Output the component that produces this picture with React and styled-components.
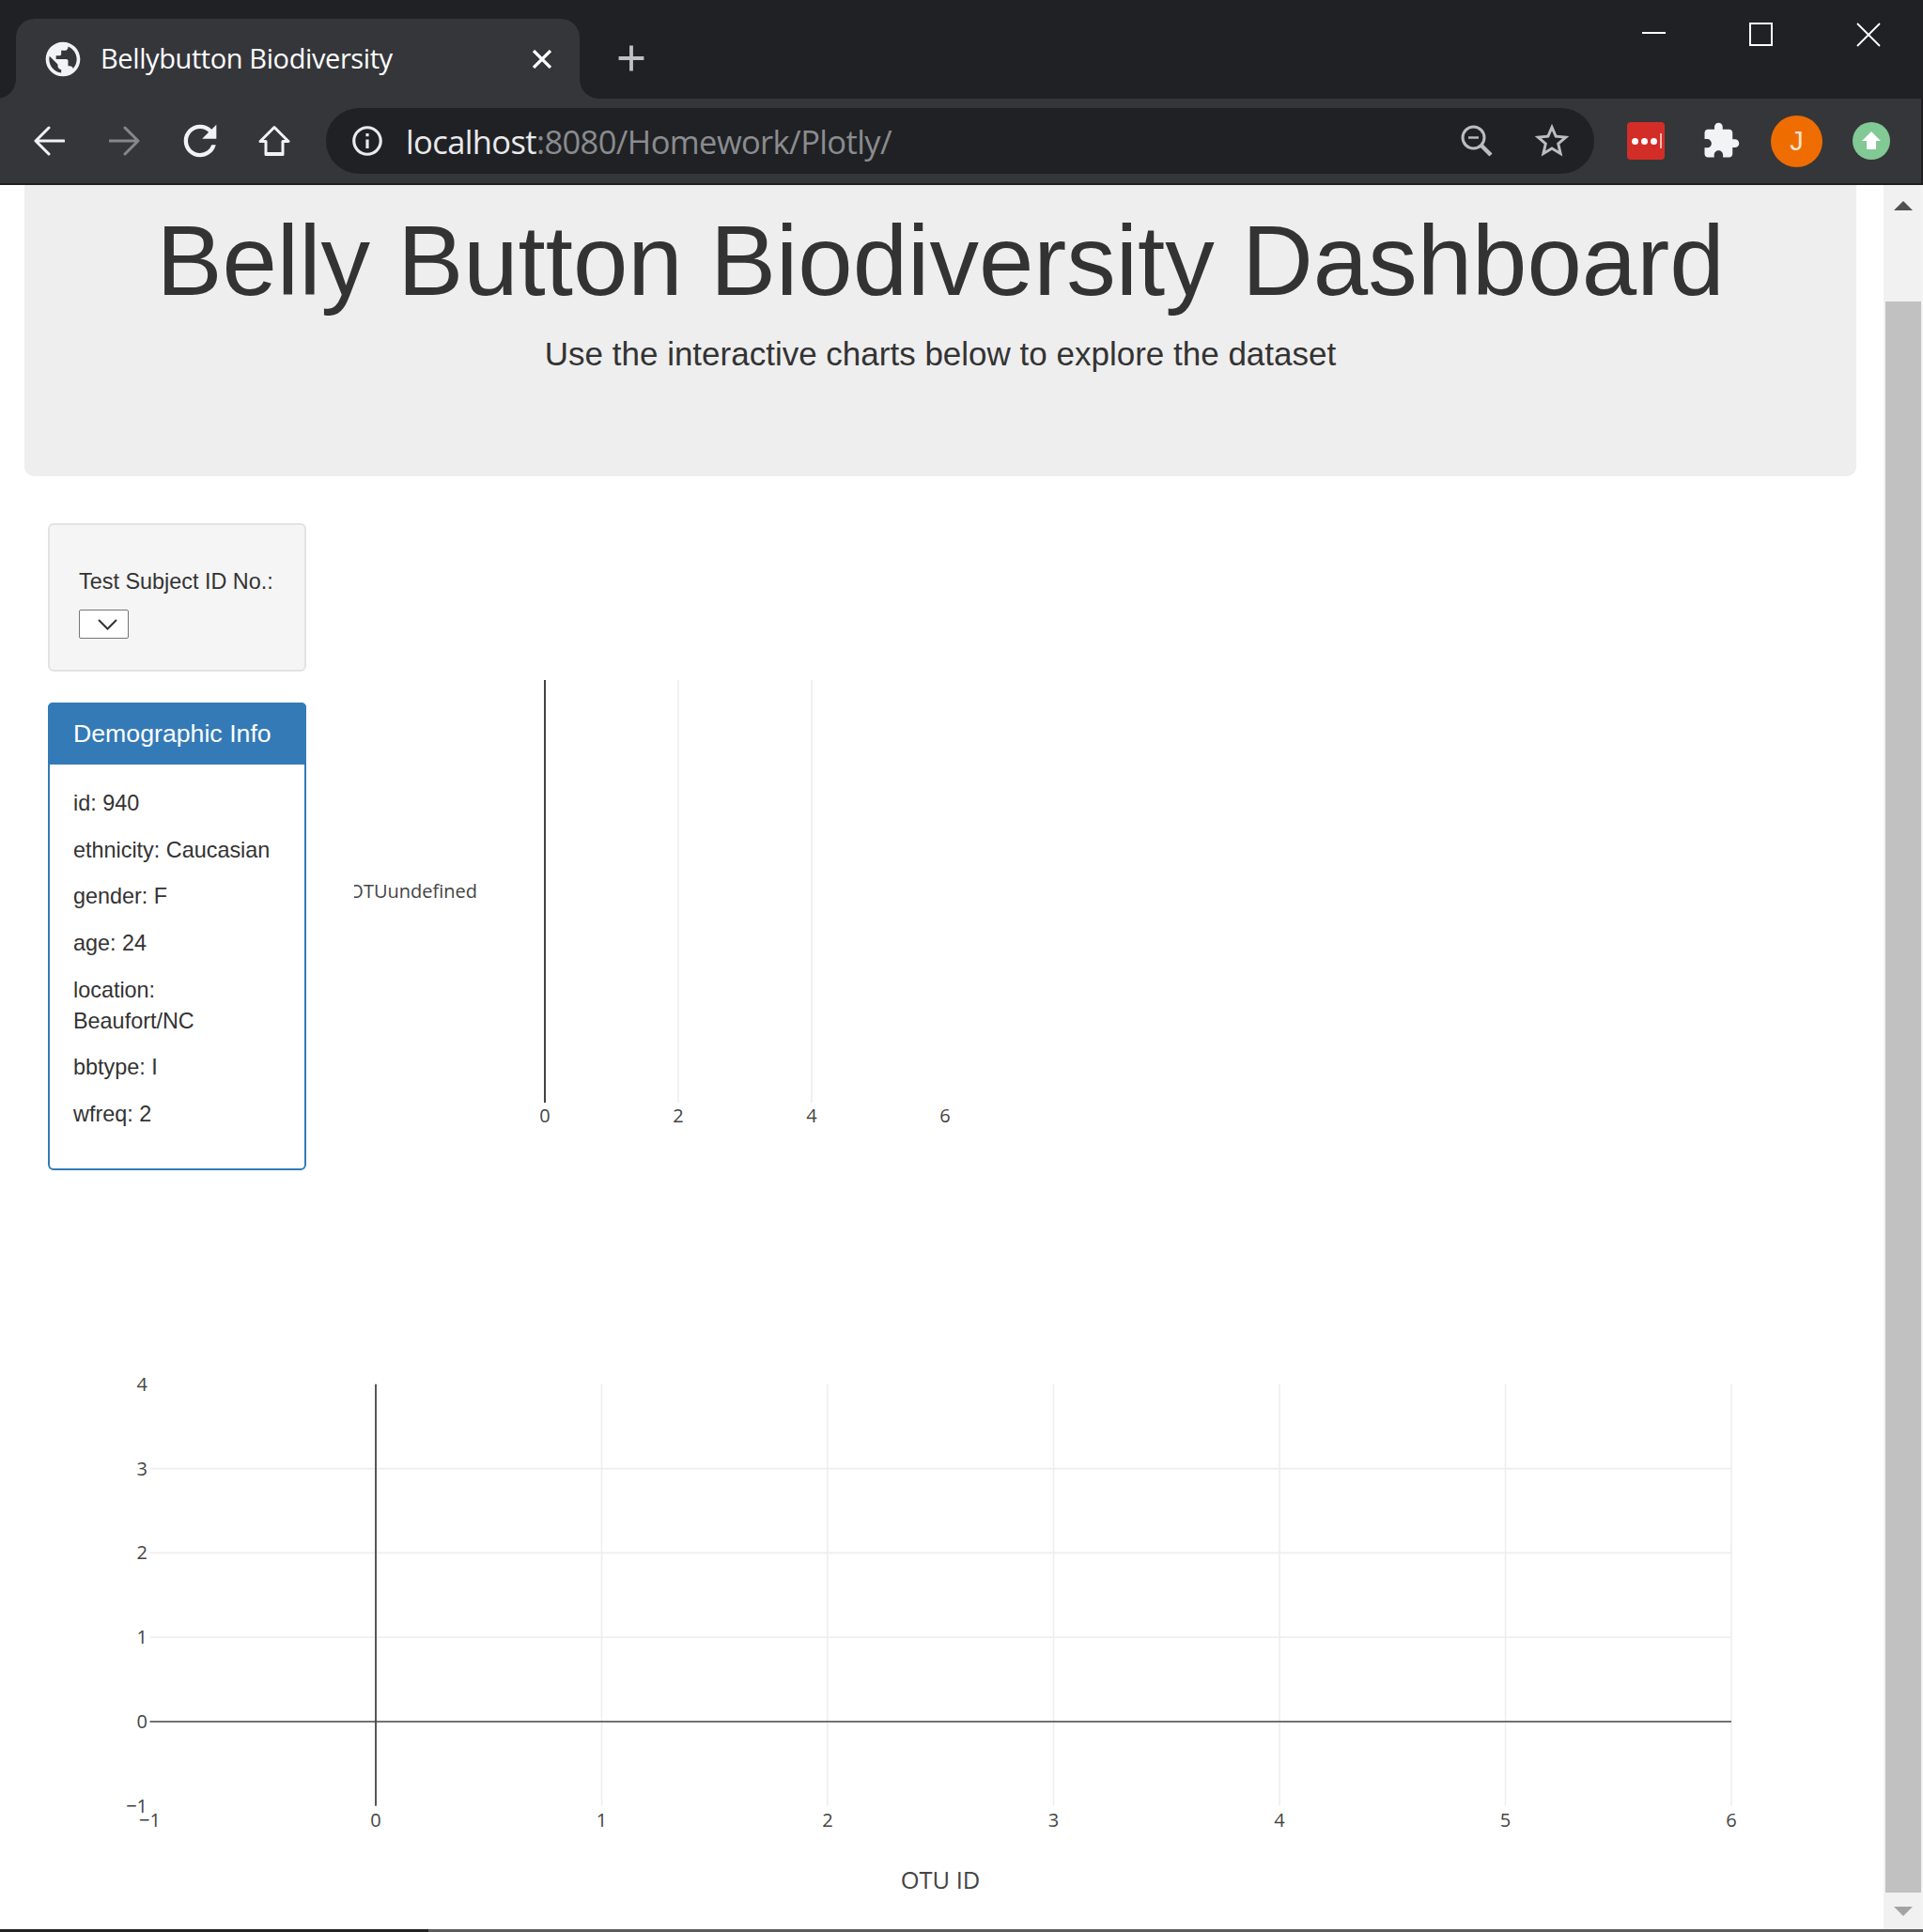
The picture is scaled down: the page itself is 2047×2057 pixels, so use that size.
import React from "react";
import styled, { createGlobalStyle } from "styled-components";
import { MdPublic, MdAdd, MdRefresh, MdInfoOutline, MdStarBorder, MdExtension } from "react-icons/md";

const Global = createGlobalStyle`
  html, body { margin: 0; padding: 0; background: #fff; overflow: hidden; }
  * { box-sizing: border-box; }
`;

const Win = styled.div`
  width: 2047px; height: 2057px; display: flex; flex-direction: column; overflow: hidden;
  font-family: "Liberation Sans", Arial, sans-serif; color: #333; background: #fff;
`;
const TabStrip = styled.div`
  height: 105px; flex: none; background: #202124; display: flex; align-items: flex-start;
  padding: 20px 0 0 17px; position: relative;
`;
const Tab = styled.div`
  width: 600px; height: 85px; background: #35363a; border-radius: 20px 20px 0 0; color: #fff;
  display: flex; align-items: center; padding: 0 29px 0 28px; position: relative;
  font: 400 29px "Open Sans", sans-serif;
  svg { flex: none; }
  &::before, &::after { content: ""; position: absolute; bottom: 0; width: 20px; height: 20px; }
  &::before { left: -20px; background: radial-gradient(circle at 0 0, #202124 19.5px, #35363a 20px); }
  &::after { right: -20px; background: radial-gradient(circle at 100% 0, #202124 19.5px, #35363a 20px); }
`;
const TabTitle = styled.span`
  flex: 1; margin-left: 18px; letter-spacing: -0.4px; white-space: nowrap; margin-top: -3px;
`;
const NewTab = styled.div`
  margin: 19px 0 0 32px; color: #bdc1c6; display: flex;
`;
const WinControls = styled.div`
  position: absolute; top: 24px; right: 45px; display: flex; align-items: flex-start; gap: 88px; color: #fff;
`;
const Toolbar = styled.div`
  height: 92px; flex: none; background: #35363a; border-bottom: 2px solid #1f1f21;
  border-right: 2px solid #1f1f21; display: flex; align-items: center; padding: 0 0 0 35px;
`;
const NavBtn = styled.div`
  width: ${(p) => p.$w}px; flex: none; display: flex; color: ${(p) => (p.$dim ? "#85878a" : "#f1f3f4")};
`;
const Omni = styled.div`
  width: 1350px; height: 70px; flex: none; border-radius: 35px; background: #202124;
  display: flex; align-items: center; padding: 0 0 0 25px; color: #e8eaed;
`;
const Url = styled.div`
  flex: 1; margin-left: 22px; font: 400 34.5px "Open Sans", sans-serif; letter-spacing: -0.62px; white-space: nowrap;
  span { color: #8a8c8f; }
`;
const OmniIcon = styled.div`
  display: flex; color: #bcbdbe; margin-right: ${(p) => p.$mr}px;
`;
const Ext = styled.div`
  display: flex; align-items: center; justify-content: center; flex: none;
`;
const Pass = styled(Ext)`
  width: 40px; height: 40px; margin-left: 35px; background: #d32d27; border-radius: 4px; gap: 3px; padding-left: 1px;
`;
const Dot = styled.i` width: 7px; height: 7px; border-radius: 50%; background: #fff; display: block; `;
const Bar = styled.i` width: 2px; height: 16px; background: #f3b9b6; display: block; `;
const Puzzle = styled(Ext)` margin-left: 39px; color: #f1f3f4; `;
const Avatar = styled(Ext)`
  width: 55px; height: 55px; border-radius: 50%; background: #ef6c00; color: #fde3cf; margin-left: 32px;
  font: 400 29px "Liberation Sans", sans-serif;
`;
const Upd = styled(Ext)`
  width: 40px; height: 40px; border-radius: 50%; background: #81c995; margin-left: 32px;
`;
const View = styled.div`
  flex: 1; display: flex; min-height: 0; position: relative;
`;
const Page = styled.main`
  flex: 1; min-width: 0; background: #fff;
`;
const Jumbo = styled.header`
  width: 1950px; height: 310px; margin-left: 26px; background: #eee; border-radius: 0 0 10px 10px;
  text-align: center; padding-top: 23px;
`;
const H1 = styled.h1`
  margin: 0; font: 400 105px/1.1 "Liberation Sans", sans-serif; color: #333;
`;
const Lead = styled.p`
  margin: 16px 0 0; font: 400 35px/1.4 "Liberation Sans", sans-serif; color: #333;
`;
const Row = styled.section`
  display: flex; margin: 50px 0 0 51px; align-items: flex-start;
`;
const Side = styled.aside`
  width: 275px; flex: none; display: flex; flex-direction: column; gap: 33px;
`;
const Well = styled.div`
  height: 158px; background: #f5f5f5; border: 2px solid #e3e3e3; border-radius: 6px; padding: 44px 31px 0;
`;
const Label = styled.div`
  font: 400 23.4px/33px "Liberation Sans", sans-serif; white-space: nowrap;
`;
const Select = styled.div`
  width: 53px; height: 31px; margin-top: 13px; background: #fff; border: 1px solid #767676; border-radius: 2px;
  display: flex; align-items: center; padding-left: 19px; color: #333;
`;
const Panel = styled.div`
  height: 498px; border: 2px solid #337ab7; border-radius: 6px; background: #fff;
`;
const PanelHead = styled.div`
  height: 66px; background: #337ab7; color: #fff; margin: -2px -2px 0; border-radius: 5px 5px 0 0;
  padding: 0 27px; display: flex; align-items: center; font: 400 26.7px "Liberation Sans", sans-serif; white-space: nowrap;
`;
const PanelBody = styled.div`
  padding: 25px 25px 0;
`;
const Item = styled.p`
  margin: 0 0 16.7px; font: 400 23.4px/33px "Liberation Sans", sans-serif;
`;
const Chart = styled.svg`
  display: block; flex: none; overflow: hidden;
  text { font-family: "Open Sans", sans-serif; font-size: 20px; fill: #444; }
  text.title { font-size: 25.5px; }
`;
const BarChart = styled(Chart)` margin-left: 51px; `;
const Bubble = styled(Chart)` margin: 187px 0 0 51px; `;
const Scroll = styled.div`
  width: 40px; flex: none; background: #f1f1f1; display: flex; flex-direction: column; align-items: stretch;
`;
const ScrollBtn = styled.div`
  height: ${(p) => p.$h}px; flex: none; display: flex; justify-content: center; padding-top: ${(p) => p.$pt}px; padding-left: 2px;
`;
const Thumb = styled.div` flex: 1; margin-left: 2px; background: #c1c1c1; `;
const Edge = styled.div` width: 2px; flex: none; background: #f4f4f4; `;
const BottomLine = styled.div`
  height: 3px; flex: none; display: flex; background: #5c5c5c;
  &::before { content: ""; width: 456px; background: #222; }
`;

const BX = [0, 2, 4, 6];
const bx = (v) => 203 + v * 71;
const Bars = () => (
  <BarChart width={998} height={660} viewBox="0 0 998 660">
    <text x="131" y="399" textAnchor="end">OTUundefined</text>
    {BX.slice(1, 3).map((v) => <line key={v} x1={bx(v)} x2={bx(v)} y1="167" y2="617" stroke="#eee" strokeWidth="1.6" />)}
    <line x1={bx(0)} x2={bx(0)} y1="167" y2="617" stroke="#444" strokeWidth="2" />
    {BX.map((v) => <text key={v} x={bx(v)} y="637.5" textAnchor="middle">{v}</text>)}
  </BarChart>
);

const XS = [-1, 0, 1, 2, 3, 4, 5, 6];
const YS = [4, 3, 2, 1, 0, -1];
const px = (v) => 349 + v * 240.5;
const py = (v) => 400 - v * 89.8;
const label = (v) => (v < 0 ? "\u2212" + -v : String(v));
const BubbleChart = () => (
  <Bubble width={1900} height={622} viewBox="0 0 1900 622">
    {XS.slice(2).map((v) => <line key={v} x1={px(v)} x2={px(v)} y1={py(4)} y2={py(-1)} stroke="#eee" strokeWidth="1.6" />)}
    {YS.filter((v) => v > 0 && v < 4).map((v) => <line key={v} x1={px(-1)} x2={px(6)} y1={py(v)} y2={py(v)} stroke="#eee" strokeWidth="1.6" />)}
    <line x1={px(-1)} x2={px(6)} y1={py(0)} y2={py(0)} stroke="#444" strokeWidth="1.4" />
    <line x1={px(0)} x2={px(0)} y1={py(4)} y2={py(-1)} stroke="#444" strokeWidth="1.8" />
    {XS.map((v) => <text key={v} x={px(v)} y="512" textAnchor="middle">{label(v)}</text>)}
    {YS.map((v) => <text key={v} x="106" y={py(v) + 7} textAnchor="end">{label(v)}</text>)}
    <text className="title" x="950" y="578" textAnchor="middle">OTU ID</text>
  </Bubble>
);

const Arrow = ({ flip }) => (
  <svg width="34" height="32" viewBox="0 0 34 32" style={flip ? { transform: "scaleX(-1)" } : undefined}>
    <path d="M33 16H3M17 2L3 16l14 14" fill="none" stroke="currentColor" strokeWidth="3" strokeLinecap="round" strokeLinejoin="round" />
  </svg>
);
const Home = () => (
  <svg width="34" height="34" viewBox="0 0 34 34">
    <path d="M17 2.5L32 17.5h-6V31.5H8V17.5H2z" fill="none" stroke="currentColor" strokeWidth="3" strokeLinejoin="round" />
    <path d="M8 30.5h18" stroke="currentColor" strokeWidth="3" />
  </svg>
);
const ZoomGlass = () => (
  <svg width="34" height="34" viewBox="0 0 34 34">
    <circle cx="13.5" cy="13.5" r="11.5" fill="none" stroke="currentColor" strokeWidth="3" />
    <path d="M8 13.5h11" stroke="currentColor" strokeWidth="2.4" />
    <path d="M22 22l10 10" stroke="currentColor" strokeWidth="4.4" />
  </svg>
);

const META = ["id: 940", "ethnicity: Caucasian", "gender: F", "age: 24", "location: Beaufort/NC", "bbtype: I", "wfreq: 2"];

export default function App() {
  return (
    <Win>
      <Global />
      <TabStrip>
        <Tab>
          <MdPublic size={44} color="#f1f3f4" />
          <TabTitle>Bellybutton Biodiversity</TabTitle>
          <svg width="22" height="20" viewBox="0 0 22 20"><path d="M2 1l18 18M20 1L2 19" stroke="#fff" strokeWidth="3.2" fill="none" /></svg>
        </Tab>
        <NewTab><MdAdd size={46} /></NewTab>
        <WinControls>
          <svg width="26" height="24" viewBox="0 0 26 24"><path d="M0 11h25" stroke="#fff" strokeWidth="2" /></svg>
          <svg width="26" height="26" viewBox="0 0 26 26"><rect x="1" y="1" width="23" height="23" fill="none" stroke="#fff" strokeWidth="2" /></svg>
          <svg width="26" height="26" viewBox="0 0 26 26"><path d="M1 1l24 24M25 1L1 25" stroke="#fff" strokeWidth="1.8" fill="none" /></svg>
        </WinControls>
      </TabStrip>
      <Toolbar>
        <NavBtn $w={81}><Arrow /></NavBtn>
        <NavBtn $w={71} $dim><Arrow flip /></NavBtn>
        <NavBtn $w={88}><MdRefresh size={52} /></NavBtn>
        <NavBtn $w={72}><Home /></NavBtn>
        <Omni>
          <MdInfoOutline size={38} color="#e8eaed" />
          <Url>localhost<span>:8080/Homework/Plotly/</span></Url>
          <OmniIcon $mr={41}><ZoomGlass /></OmniIcon>
          <OmniIcon $mr={23}><MdStarBorder size={44} /></OmniIcon>
        </Omni>
        <Pass><Dot /><Dot /><Dot /><Bar /></Pass>
        <Puzzle><MdExtension size={42} /></Puzzle>
        <Avatar>J</Avatar>
        <Upd>
          <svg width="20" height="22" viewBox="0 0 20 22"><path d="M10 1l10 10h-5v9H5v-9H0z" fill="#fff" /></svg>
        </Upd>
      </Toolbar>
      <View>
        <Page>
          <Jumbo>
            <H1>Belly Button Biodiversity Dashboard</H1>
            <Lead>Use the interactive charts below to explore the dataset</Lead>
          </Jumbo>
          <Row>
            <Side>
              <Well>
                <Label>Test Subject ID No.:</Label>
                <Select>
                  <svg width="21" height="12" viewBox="0 0 21 12"><path d="M1 1l9.5 9.5L20 1" fill="none" stroke="#333" strokeWidth="2" /></svg>
                </Select>
              </Well>
              <Panel>
                <PanelHead>Demographic Info</PanelHead>
                <PanelBody>{META.map((m) => <Item key={m}>{m}</Item>)}</PanelBody>
              </Panel>
            </Side>
            <Bars />
          </Row>
          <BubbleChart />
        </Page>
        <Scroll>
          <ScrollBtn $h={124} $pt={17}>
            <svg width="20" height="10" viewBox="0 0 20 10"><path d="M10 0l10 10H0z" fill="#505050" /></svg>
          </ScrollBtn>
          <Thumb />
          <ScrollBtn $h={39} $pt={15}>
            <svg width="20" height="10" viewBox="0 0 20 10"><path d="M0 0h20L10 10z" fill="#a3a3a3" /></svg>
          </ScrollBtn>
        </Scroll>
        <Edge />
      </View>
      <BottomLine />
    </Win>
  );
}
